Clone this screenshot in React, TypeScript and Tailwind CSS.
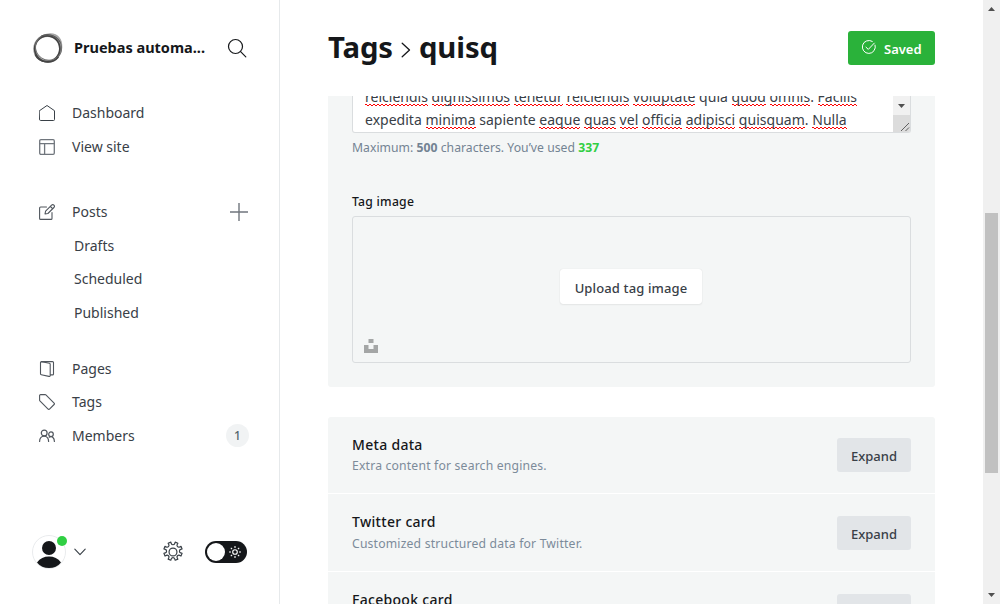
import type { ReactNode } from "react";

const strokeProps = {
  fill: "none",
  stroke: "currentColor",
  strokeLinecap: "round" as const,
  strokeLinejoin: "round" as const,
};

function HomeIcon() {
  return (
    <svg className="size-4 text-[#394047]" viewBox="0 0 16 16" {...strokeProps} strokeWidth="1">
      <path d="M.5 5.7 8 .5l7.500 5.200v8.800a1 1 0 0 1-1 1h-13a1 1 0 0 1-1-1z" />
    </svg>
  );
}

function LayoutIcon() {
  return (
    <svg className="size-4 text-[#70767d]" viewBox="0 0 16 16" {...strokeProps} strokeWidth="1.300">
      <rect x=".7" y=".7" width="14.600" height="14.600" rx="1.200" />
      <path d="M.7 4.600h14.600M5.600 4.600v10.700" />
    </svg>
  );
}

function PostsIcon() {
  return (
    <svg className="size-4 text-[#50565d]" viewBox="0 0 16 16" {...strokeProps} strokeWidth="1.100">
      <path d="M7.500 3H1.600a1 1 0 0 0-1 1v10.400a1 1 0 0 0 1 1H12a1 1 0 0 0 1-1V8.500" />
      <path d="m6 10 .6-2.800 6-6a1.600 1.600 0 0 1 2.300 2.300l-6 6zM11.400 2.500l2.200 2.200" />
    </svg>
  );
}

function PagesIcon() {
  return (
    <svg className="size-4 text-[#50565d]" viewBox="0 0 16 16" {...strokeProps} strokeWidth="1.100">
      <path d="M2.500.6h11a1 1 0 0 1 1 1v11.300a1 1 0 0 1-1 1h-2" />
      <path d="M2.500.6a1 1 0 0 0-1 1v11.200a1 1 0 0 0 .8 1l7.600 1.600a1 1 0 0 0 1.300-1V3.200a1 1 0 0 0-.8-1z" />
    </svg>
  );
}

function TagIcon() {
  return (
    <svg className="size-4 text-[#50565d]" viewBox="0 0 16 16" {...strokeProps} strokeWidth="1.100">
      <path d="M1.600.6h4.600a1 1 0 0 1 .7.300l8.200 8.200a1 1 0 0 1 0 1.400l-4.600 4.600a1 1 0 0 1-1.400 0L.9 6.900a1 1 0 0 1-.3-.7V1.600a1 1 0 0 1 1-1z" />
    </svg>
  );
}

function MembersIcon() {
  return (
    <svg className="h-4 w-4 text-[#50565d]" viewBox="0 0 16 16" {...strokeProps} strokeWidth="1.200">
      <circle cx="5.200" cy="5" r="2.900" />
      <path d="M.6 13.400c0-3 1.800-5.300 4.500-5.300s4.500 2.300 4.500 5.300" />
      <circle cx="12" cy="6.200" r="2.300" />
      <path d="M10.200 9.200c3-1.500 5.200.7 5.200 4.200" />
    </svg>
  );
}

function RingLogo() {
  return (
    <svg className="size-8" viewBox="0 0 32 32" fill="none">
      <path
        fillRule="evenodd"
        fill="#a5a5a5"
        d="M18 1.200C26 1 30.800 7 30.300 15c-.3 9-6.300 15.500-14.300 15.500C7 30.500 1 24.500 1.200 16.500 1.400 8 9 1.500 18 1.200zM15.500 5C8.500 5 4 9.500 4 16.500S9 28 15.500 28 27 23.500 27 16.500 22.500 5 15.500 5z"
      />
      <ellipse cx="15.300" cy="16.800" rx="12.600" ry="12.900" stroke="#444" strokeWidth="1.700" />
      <ellipse cx="16.500" cy="15.500" rx="13.300" ry="12.600" transform="rotate(35 16.500 15.500)" stroke="#707070" strokeWidth="1" />
      <path d="M9 4.200C17 .5 25 4 28.300 10.500" stroke="#555" strokeWidth="1" />
      <path d="M3 22.500C7 31 20 33 26.500 25" stroke="#444" strokeWidth="1.200" />
    </svg>
  );
}

function GearIcon() {
  return (
    <svg className="size-[22px] text-[#394047]" viewBox="0 0 24 24" {...strokeProps} strokeWidth="1.300">
      <circle cx="12" cy="12" r="4.300" />
      <path d="M10.100 2.700a2 2 0 0 0 3.800 0l.5-1.500 2.900 1.200-.7 1.400a2 2 0 0 0 2.700 2.700l1.400-.7 1.200 2.900-1.500.5a2 2 0 0 0 0 3.800l1.500.5-1.200 2.900-1.400-.7a2 2 0 0 0-2.700 2.700l.7 1.400-2.900 1.200-.5-1.500a2 2 0 0 0-3.800 0l-.5 1.500-2.900-1.200.7-1.400a2 2 0 0 0-2.700-2.700l-1.400.7-1.200-2.900 1.500-.5a2 2 0 0 0 0-3.800l-1.500-.5 1.200-2.900 1.400.7a2 2 0 0 0 2.700-2.700l-.7-1.400 2.900-1.200z" />
    </svg>
  );
}

function SunIcon() {
  return (
    <svg className="size-3" viewBox="0 0 12 12" fill="none" stroke="#fff" strokeWidth="1.100">
      <circle cx="6" cy="6" r="2.300" />
      <path d="M6 0v2M6 10v2M0 6h2M10 6h2M1.800 1.800l1.300 1.300M8.900 8.900l1.300 1.300M10.200 1.800 8.900 3.100M3.100 8.900l-1.300 1.300" />
    </svg>
  );
}

function NavItem({ icon, label, children }: { icon: ReactNode; label: string; children?: ReactNode }) {
  return (
    <li className="flex h-[33.600px] items-center pr-[31px] pl-[39px]">
      {icon}
      <span className="ml-[17px] flex-1">{label}</span>
      {children}
    </li>
  );
}

function SubItem({ label }: { label: string }) {
  return <li className="flex h-[33.600px] items-center pl-[74px]">{label}</li>;
}

function Sidebar() {
  return (
    <aside className="flex w-[280px] shrink-0 flex-col border-r border-[#e6e9eb] text-[14px] leading-5 text-[#394047]">
      <header className="flex h-[96px] items-center pr-8 pl-8">
        <RingLogo />
        <span className="mb-[2px] ml-[10px] flex-1 text-[14.500px] font-bold whitespace-nowrap text-[#15171a]">Pruebas automa...</span>
        <svg className="size-5 text-[#15171a]" viewBox="0 0 20 20" {...strokeProps} strokeWidth="1.200">
          <circle cx="8.500" cy="8.500" r="7" />
          <path d="m13.600 13.600 5.200 5.200" />
        </svg>
      </header>
      <ul className="pt-[0.400px]">
        <NavItem icon={<HomeIcon />} label="Dashboard" />
        <NavItem icon={<LayoutIcon />} label="View site" />
      </ul>
      <ul className="mt-[31.600px]">
        <NavItem icon={<PostsIcon />} label="Posts">
          <svg className="size-[18px] text-[#70767d]" viewBox="0 0 18 18" fill="none" stroke="currentColor" strokeWidth="1.400">
            <path d="M9 0v18M0 9h18" />
          </svg>
        </NavItem>
        <SubItem label="Drafts" />
        <SubItem label="Scheduled" />
        <SubItem label="Published" />
      </ul>
      <ul className="mt-[22.400px]">
        <NavItem icon={<PagesIcon />} label="Pages" />
        <NavItem icon={<TagIcon />} label="Tags" />
        <NavItem icon={<MembersIcon />} label="Members">
          <span className="-mr-px flex size-[23px] items-center justify-center rounded-full bg-[#f1f3f4] pt-px text-[12px] font-medium text-[#54666d]">1</span>
        </NavItem>
      </ul>
      <footer className="mt-auto flex h-[104px] items-center pl-8">
        <div className="relative size-[34px]">
          <svg className="size-[34px]" viewBox="0 0 34 34">
            <circle cx="17" cy="17" r="16.500" fill="#fff" stroke="#e9ebed" />
            <circle cx="17" cy="13" r="7" fill="#15171a" />
            <path d="M5 27.500C8 23.500 12 21.600 17 21.600s9 1.900 12 5.900c-3 3.700-7 5.500-12 5.500S8 31.200 5 27.500z" fill="#15171a" />
          </svg>
          <span className="absolute top-px -right-px size-[10px] rounded-full bg-[#30cf43]" />
        </div>
        <svg className="ml-2 h-[8px] w-[12px]" viewBox="0 0 12 8" {...strokeProps} strokeWidth="1.100">
          <path d="m.8 1.200 5.200 5.500 5.200-5.500" />
        </svg>
        <span className="ml-[76px]"><GearIcon /></span>
        <div className="ml-[21px] flex h-[22px] w-[42px] items-center justify-between rounded-full bg-[#15171a] pr-[6px] pl-[2px]">
          <span className="size-[18px] rounded-full bg-white" />
          <SunIcon />
        </div>
      </footer>
    </aside>
  );
}

function Misspelt({ children }: { children: ReactNode }) {
  return (
    <span className="bg-[linear-gradient(90deg,#f00_50%,transparent_50%),linear-gradient(90deg,transparent_50%,#f00_50%)] bg-[length:4px_1px,4px_1px] bg-[position:0_calc(100%-1px),0_100%] bg-repeat-x">
      {children}
    </span>
  );
}

function DescriptionText({ text }: { text: string }) {
  return (
    <>
      {text.split(" ").map((word, i) => {
        const flagged = word.startsWith("*");
        const clean = flagged ? word.slice(1) : word;
        const stop = clean.endsWith(".") ? "." : "";
        const body = stop ? clean.slice(0, -1) : clean;
        return (
          <span key={i}>
            {i > 0 && " "}
            {flagged ? <Misspelt>{body}</Misspelt> : body}
            {stop}
          </span>
        );
      })}
    </>
  );
}

function ExpandSection({ title, detail }: { title: string; detail?: string }) {
  return (
    <section className="group flex h-[78px] shrink-0 items-start justify-between border-b border-white bg-[#f4f6f6] px-6 pt-[17px] first:h-[77px]">
      <div>
        <h4 className="text-[14px] leading-[21px] font-medium tracking-[0.300px] text-[#15171a]">{title}</h4>
        {detail && (
          <p className="mt-px text-[12.200px] leading-[21px] tracking-[0.180px] text-[#7c8b9a] group-first:mt-0">{detail}</p>
        )}
      </div>
      <button className="mt-[5px] flex h-[34px] w-[74px] items-center justify-center rounded-[3px] bg-[#e2e5e8] pt-[3px] text-[13px] font-medium text-[#394047] group-first:mt-1">
        Expand
      </button>
    </section>
  );
}

function PageScrollbar() {
  return (
    <div className="flex w-[17px] shrink-0 flex-col items-center bg-[#f0f0f0]">
      <svg className="h-[17px] w-[17px] shrink-0" viewBox="0 0 17 17"><path d="M5 11h7L8.500 7z" fill="#505050" /></svg>
      <div className="mt-[196px] h-[260px] w-[13px] bg-[#c1c1c1]" />
      <svg className="mt-auto h-[17px] w-[17px] shrink-0" viewBox="0 0 17 17"><path d="M5 6h7L8.500 10z" fill="#505050" /></svg>
    </div>
  );
}

export default function App() {
  return (
    <div className="flex h-[604px] w-[1000px] overflow-hidden bg-white font-['Noto_Sans','Open_Sans',sans-serif]">
      <Sidebar />
      <main className="flex min-w-0 flex-1 flex-col px-12">
        <header className="flex h-[96px] shrink-0 items-center justify-between">
          <h1 className="flex items-center text-[29.300px] leading-9 font-bold tracking-[-0.100px] text-[#15171a]">
            <span className="mb-[3px]">Tags</span>
            <svg className="mx-2 mt-[3px] h-4 w-[10px]" viewBox="0 0 10 16" {...strokeProps} strokeWidth="1.300">
              <path d="m1.200 1.200 7.300 6.800-7.300 6.800" />
            </svg>
            <span className="mb-[3px]">quisq</span>
          </h1>
          <button className="flex h-[34px] w-[87px] items-center rounded-[3px] bg-[#2ab23a] pl-[14px] text-[13px] font-semibold text-white">
            <svg className="mb-[3px] size-[14px]" viewBox="0 0 14 14" {...strokeProps} strokeWidth="1">
              <path d="M13.100 5.100A6.500 6.500 0 1 1 10.300 1.400" />
              <path d="m4 7.200 2.300 2.200 6-6.300" />
            </svg>
            <span className="ml-[8px] pt-[3px]">Saved</span>
          </button>
        </header>
        <div className="flex flex-1 flex-col overflow-hidden">
          <section className="h-[291px] shrink-0 rounded-b-[3px] bg-[#f4f6f6] px-6">
            <div className="flex h-[37px] justify-between overflow-hidden rounded-b-[3px] border border-t-0 border-[#dadddf] bg-white">
              <div className="-mt-[11px] pl-3 text-[14px] leading-[23px] whitespace-nowrap text-[#394047]">
                <p className="tracking-[0.010px]"><DescriptionText text="*reiciendis *dignissimos *tenetur *reiciendis *voluptate quia *quod *omnis. *Facilis" /></p>
                <p className="tracking-[0.020px]"><DescriptionText text="expedita *minima sapiente *eaque *quas *vel *officia *adipisci *quisquam. *Nulla" /></p>
              </div>
              <div className="flex w-[17px] flex-col bg-[#f1f1f1]">
                <svg className="h-[19px] w-[17px]" viewBox="0 0 17 19"><path d="M5 8h7l-3.500 4z" fill="#505050" /></svg>
                <svg className="h-[17px] w-[17px] bg-[#dcdcdc]" viewBox="0 0 17 17" stroke="#606060" strokeWidth="1"><path d="m8 16 8-8M12.500 16l3.500-3.500" /></svg>
              </div>
            </div>
            <p className="flex h-[28px] items-center pt-[2px] text-[12.200px] text-[#738393]">
              <span className="tracking-[0.030px]">Maximum: <b>500</b> characters. You’ve used <b className="text-[#30cf43]">337</b></span>
            </p>
            <h4 className="mt-[31px] flex h-6 items-start pt-[1px] text-[12.200px] leading-[18px] font-medium tracking-[0.250px] text-[#15171a]">Tag image</h4>
            <div className="flex h-[147px] flex-col items-center rounded-[3px] border border-[#dadddf] px-[11px]">
              <button className="mt-[52px] mr-px flex h-[35px] w-[142px] shrink-0 items-center justify-center rounded-[3px] bg-white pt-[4px] text-[13px] font-medium tracking-[0.130px] text-[#394047] shadow-[0_0_1px_rgba(0,0,0,0.15),0_1px_2px_rgba(0,0,0,0.06)]">Upload tag image</button>
              <svg className="mt-[35px] size-[14px] self-start" viewBox="0 0 14 14" fill="#a4a6a6"><path d="M4.500 0h5v4h-5zM0 6h4.500v4h5V6H14v8H0z" /></svg>
            </div>
          </section>
          <div className="mt-[30px] flex flex-col overflow-hidden rounded-t-[3px]">
            <ExpandSection title="Meta data" detail="Extra content for search engines." />
            <ExpandSection title="Twitter card" detail="Customized structured data for Twitter." />
            <ExpandSection title="Facebook card" />
          </div>
        </div>
      </main>
      <PageScrollbar />
    </div>
  );
}
